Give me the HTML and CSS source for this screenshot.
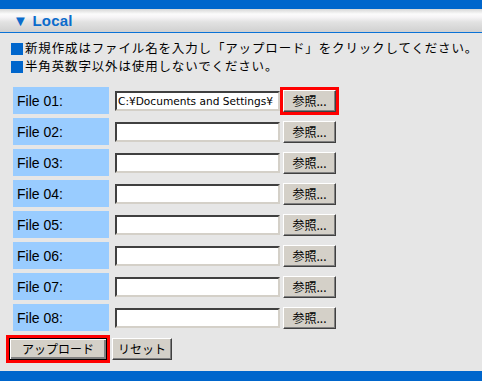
FILE: index.html
```html
<!DOCTYPE html>
<html lang="ja">
<head>
<meta charset="utf-8">
<link rel="stylesheet" href="styles.css">
</head>
<body>
<div class="topbar"></div>
<div class="header"><span class="title">▼ Local</span></div>
<div class="intro">
  <p><span class="sq"></span>新規作成はファイル名を入力し「アップロード」をクリックしてください。</p>
  <p><span class="sq"></span>半角英数字以外は使用しないでください。</p>
</div>
<div class="rows">
  <div class="row"><div class="label">File 01:</div><input class="file" type="text" value="C:¥Documents and Settings¥"><span class="hl"><button class="browse">参照...</button></span></div>
  <div class="row"><div class="label">File 02:</div><input class="file" type="text"><span class="nohl"><button class="browse">参照...</button></span></div>
  <div class="row"><div class="label">File 03:</div><input class="file" type="text"><span class="nohl"><button class="browse">参照...</button></span></div>
  <div class="row"><div class="label">File 04:</div><input class="file" type="text"><span class="nohl"><button class="browse">参照...</button></span></div>
  <div class="row"><div class="label">File 05:</div><input class="file" type="text"><span class="nohl"><button class="browse">参照...</button></span></div>
  <div class="row"><div class="label">File 06:</div><input class="file" type="text"><span class="nohl"><button class="browse">参照...</button></span></div>
  <div class="row"><div class="label">File 07:</div><input class="file" type="text"><span class="nohl"><button class="browse">参照...</button></span></div>
  <div class="row"><div class="label">File 08:</div><input class="file" type="text"><span class="nohl"><button class="browse">参照...</button></span></div>
</div>
<div class="actions">
  <span class="hl"><button class="btn upload">アップロード</button></span>
  <button class="btn reset">リセット</button>
</div>
<div class="bottombar"></div>
</body>
</html>
```
FILE: styles.css
```css
html, body {
  margin: 0;
  padding: 0;
  width: 482px;
  height: 381px;
  overflow: hidden;
  background: #e6e6e6;
  font-family: "Noto Sans CJK JP", "Liberation Sans", sans-serif;
  color: #000;
  display: flex;
  flex-direction: column;
}
.topbar {
  height: 9px;
  background: #0066cc;
  flex: none;
}
.header {
  height: 23px;
  flex: none;
  border-bottom: 1px solid #0a72d6;
  background: linear-gradient(#d6d6d6 0px, #fbfbfb 5px, #f7f5f7 8px, #e2e2e2 13px, #d0d0d0 23px);
  display: flex;
  align-items: center;
}
.title {
  margin-left: 13px;
  font-family: "Liberation Sans", Arial, sans-serif;
  font-weight: bold;
  font-size: 15px;
  color: #0b6ccc;
  letter-spacing: 0.2px;
}
.intro {
  padding: 6px 0 0 11px;
  flex: none;
}
.intro p {
  margin: 0;
  font-size: 12.5px;
  letter-spacing: 0.85px;
  line-height: 18px;
  height: 18px;
  white-space: nowrap;
}
.sq {
  display: inline-block;
  width: 12px;
  height: 12px;
  background: #0066cc;
  margin-right: 2px;
  vertical-align: -2px;
}
.rows {
  margin-top: 12px;
  padding-left: 13px;
  display: flex;
  flex-direction: column;
  gap: 4px;
  flex: none;
}
.row {
  display: flex;
  align-items: center;
  height: 27px;
}
.label {
  width: 96px;
  height: 27px;
  background: #99ccff;
  box-sizing: border-box;
  padding-left: 4px;
  display: flex;
  align-items: center;
  font-family: "Liberation Sans", Arial, sans-serif;
  font-size: 14px;
}
.file {
  margin: 0 0 0 6px;
  width: 165px;
  height: 20px;
  box-sizing: border-box;
  border: 2px solid;
  border-color: #404040 #d4d0c8 #d4d0c8 #404040;
  background: #fff;
  padding: 0 1px;
  font-family: "DejaVu Sans", sans-serif;
  font-size: 10.6px;
  color: #000;
  outline: none;
}
.hl, .nohl {
  display: inline-flex;
  border: 3px solid #ff0000;
  margin-left: 0px;
}
.nohl {
  border-color: transparent;
}
button {
  margin: 0;
  padding: 0;
  box-sizing: border-box;
  background: #d4d0c8;
  border: 1px solid;
  border-color: #ffffff #404040 #404040 #ffffff;
  box-shadow: inset -1px -1px 0 #808080;
  font-family: "Noto Sans CJK JP", sans-serif;
  font-size: 12px;
  color: #000;
  line-height: 1;
}
.browse {
  width: 53px;
  height: 22px;
}
.actions {
  margin-top: 4px;
  padding-left: 6px;
  display: flex;
  align-items: center;
  gap: 2px;
  flex: none;
}
.upload {
  width: 98px;
  height: 22px;
  border-color: #000;
  box-shadow: inset 1px 1px 0 #fff, inset -2px -2px 0 #808080;
}
.reset {
  width: 60px;
  height: 22px;
}
.bottombar {
  margin-top: auto;
  height: 10px;
  background: #0066cc;
  flex: none;
}
```
